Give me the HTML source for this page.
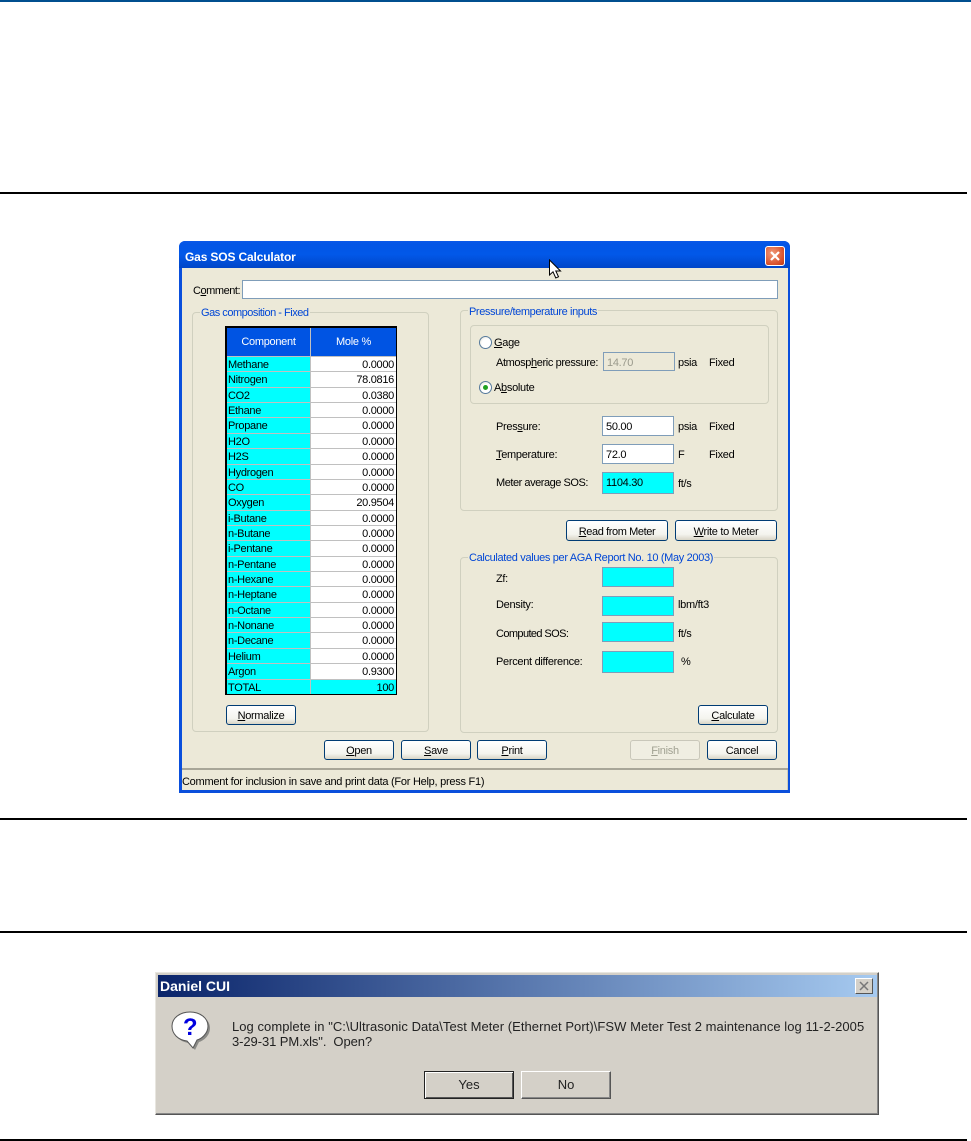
<!DOCTYPE html>
<html><head><meta charset="utf-8"><style>
html,body{margin:0;padding:0;background:#fff}
body{position:relative;width:971px;height:1141px;overflow:hidden;font-family:"Liberation Sans",sans-serif;font-size:11px;color:#000;letter-spacing:-.3px}
div{position:absolute;box-sizing:border-box}
.r{left:0;width:967px;height:2px;background:#000}
.t{white-space:nowrap;line-height:14px;height:14px;margin-top:1px}
.in{border:1px solid #7f9db9;background:#fff;padding-left:3px;line-height:21px;font-size:11px}
.g{border:1px solid #d0d0bf;border-radius:4px}
.lg{background:#ece9d8;color:#0046d5;padding:0 1px;white-space:nowrap;line-height:14px;height:14px;margin-top:1px}
.b{border:1px solid #003c74;border-radius:3px;background:linear-gradient(#fff,#f4f4ee 70%,#d9d5c6);text-align:center;line-height:21px;white-space:nowrap}
.tb{left:225px;top:326px;width:172px;height:369px;border:1px solid #000;background:#fff;border-width:2px 1px 1px 2px}
.h{left:0;top:0;height:29px;background:#0054e3;color:#fff;text-align:center;line-height:29px}
.row{position:relative;flex:1;border-top:1px solid #c0c0c0;line-height:17px;font-size:11px}
.row span{position:absolute;top:0;height:15px;box-sizing:border-box;white-space:nowrap}
.n{left:0;width:84px;background:#0ff;padding-left:1px;border-right:1px solid #c0c0c0;height:100%!important}
.v{left:84px;width:85px;text-align:right;padding-right:2px}
.rad{width:13px;height:13px;border:1px solid #567a9c;border-radius:50%;background:radial-gradient(circle at 60% 60%,#fff 50%,#dcd8c8)}
.d{font-size:13px;letter-spacing:0;color:#222;filter:blur(.3px)}
</style></head><body>
<div style="left:0;top:0;width:971px;height:2px;background:#004f8f"></div>
<div class="r" style="top:192px"></div>
<div class="r" style="top:818px"></div>
<div class="r" style="top:931px"></div>
<div class="r" style="top:1139px"></div>

<div style="left:179px;top:241px;width:611px;height:552px;background:#0a4fdc;border-radius:6px 6px 0 0"></div>
<div style="left:179px;top:241px;width:611px;height:27px;border-radius:6px 6px 0 0;background:linear-gradient(#0a58e8,#0355e6 12%,#0258e8 50%,#0046c8)"></div>
<div style="left:182px;top:268px;width:606px;height:522px;background:#ece9d8"></div>
<div class="t" style="left:185px;top:249px;color:#fff;font-weight:bold;font-size:12px;letter-spacing:-.15px">Gas SOS Calculator</div>
<div style="left:765px;top:246px;width:20px;height:20px;border:1px solid #fff;border-radius:3px;background:radial-gradient(circle at 35% 35%,#f09a7a,#d8502a 70%,#b83a1a)">
<svg width="18" height="18" style="position:absolute;left:0;top:0"><path d="M5 5L13 13M13 5L5 13" stroke="#fff" stroke-width="2.2"/></svg></div>
<svg style="position:absolute;left:548px;top:259px" width="14" height="21"><path d="M1.5 1V16L5 12.800L7.800 19L10.500 17.800L7.800 12H12.500Z" fill="#fff" stroke="#000"/></svg>

<div class="t" style="left:193px;top:283px;letter-spacing:-.45px">C<u>o</u>mment:</div>
<div class="in" style="left:242px;top:280px;width:536px;height:19px"></div>

<div class="g" style="left:192px;top:312px;width:237px;height:420px"></div>
<div class="lg" style="left:200px;top:305px;letter-spacing:-.48px">Gas composition - Fixed</div>

<div class="tb">
<div class="h" style="width:83px">Component</div><div class="h" style="left:84px;width:85px">Mole %</div>
<div style="left:83px;top:0;width:1px;height:29px;background:#c0c0c0"></div>
<div style="left:0;top:28px;width:169px;height:338px;display:flex;flex-direction:column">
<div class="row"><span class="n">Methane</span><span class="v">0.0000</span></div>
<div class="row"><span class="n">Nitrogen</span><span class="v">78.0816</span></div>
<div class="row"><span class="n">CO2</span><span class="v">0.0380</span></div>
<div class="row"><span class="n">Ethane</span><span class="v">0.0000</span></div>
<div class="row"><span class="n">Propane</span><span class="v">0.0000</span></div>
<div class="row"><span class="n">H2O</span><span class="v">0.0000</span></div>
<div class="row"><span class="n">H2S</span><span class="v">0.0000</span></div>
<div class="row"><span class="n">Hydrogen</span><span class="v">0.0000</span></div>
<div class="row"><span class="n">CO</span><span class="v">0.0000</span></div>
<div class="row"><span class="n">Oxygen</span><span class="v">20.9504</span></div>
<div class="row"><span class="n">i-Butane</span><span class="v">0.0000</span></div>
<div class="row"><span class="n">n-Butane</span><span class="v">0.0000</span></div>
<div class="row"><span class="n">i-Pentane</span><span class="v">0.0000</span></div>
<div class="row"><span class="n">n-Pentane</span><span class="v">0.0000</span></div>
<div class="row"><span class="n">n-Hexane</span><span class="v">0.0000</span></div>
<div class="row"><span class="n">n-Heptane</span><span class="v">0.0000</span></div>
<div class="row"><span class="n">n-Octane</span><span class="v">0.0000</span></div>
<div class="row"><span class="n">n-Nonane</span><span class="v">0.0000</span></div>
<div class="row"><span class="n">n-Decane</span><span class="v">0.0000</span></div>
<div class="row"><span class="n">Helium</span><span class="v">0.0000</span></div>
<div class="row"><span class="n">Argon</span><span class="v">0.9300</span></div>
<div class="row" style="background:#0ff"><span class="n">TOTAL</span><span class="v">100</span></div>
</div></div>

<div class="b" style="left:226px;top:705px;width:70px;height:20px"><u>N</u>ormalize</div>

<div class="g" style="left:460px;top:310px;width:318px;height:201px"></div>
<div class="lg" style="left:468px;top:304px;letter-spacing:-.4px">Pressure/temperature inputs</div>
<div class="g" style="left:470px;top:325px;width:299px;height:79px"></div>
<div class="rad" style="left:479px;top:336px"></div>
<div class="t" style="left:494px;top:335px"><u>G</u>age</div>
<div class="t" style="left:496px;top:355px;letter-spacing:-.38px">Atmosp<u>h</u>eric pressure:</div>
<div class="in" style="left:603px;top:352px;width:72px;height:19px;background:#ece9d8;color:#9a9a8c">14.70</div>
<div class="t" style="left:678px;top:355px">psia</div><div class="t" style="left:709px;top:355px">Fixed</div>
<div class="rad" style="left:479px;top:381px"></div>
<div style="left:483px;top:385px;width:5px;height:5px;border-radius:50%;background:#21a121"></div>
<div class="t" style="left:494px;top:380px">A<u>b</u>solute</div>

<div class="t" style="left:496px;top:419px">Pres<u>s</u>ure:</div>
<div class="in" style="left:602px;top:416px;width:72px;height:20px">50.00</div>
<div class="t" style="left:678px;top:419px">psia</div><div class="t" style="left:709px;top:419px">Fixed</div>
<div class="t" style="left:496px;top:447px"><u>T</u>emperature:</div>
<div class="in" style="left:602px;top:444px;width:72px;height:20px">72.0</div>
<div class="t" style="left:678px;top:447px">F</div><div class="t" style="left:709px;top:447px">Fixed</div>
<div class="t" style="left:496px;top:475px;letter-spacing:-.46px">Meter average SOS:</div>
<div class="in" style="left:602px;top:472px;width:72px;height:22px;background:#0ff">1104.30</div>
<div class="t" style="left:678px;top:476px">ft/s</div>

<div class="b" style="left:566px;top:520px;width:102px;height:21px;line-height:23px;letter-spacing:-.4px"><u>R</u>ead from Meter</div>
<div class="b" style="left:675px;top:520px;width:102px;height:21px;line-height:23px"><u>W</u>rite to Meter</div>

<div class="g" style="left:460px;top:557px;width:318px;height:176px"></div>
<div class="lg" style="left:468px;top:550px;letter-spacing:-.34px">Calculated values per AGA Report No. 10 (May 2003)</div>
<div class="t" style="left:496px;top:571px">Zf:</div>
<div class="in" style="left:602px;top:567px;width:72px;height:20px;background:#0ff"></div>
<div class="t" style="left:496px;top:597px">Density:</div>
<div class="in" style="left:602px;top:596px;width:72px;height:20px;background:#0ff"></div>
<div class="t" style="left:678px;top:597px">lbm/ft3</div>
<div class="t" style="left:496px;top:626px;letter-spacing:-.6px">Computed SOS:</div>
<div class="in" style="left:602px;top:622px;width:72px;height:20px;background:#0ff"></div>
<div class="t" style="left:678px;top:626px">ft/s</div>
<div class="t" style="left:496px;top:654px">Percent difference:</div>
<div class="in" style="left:602px;top:651px;width:72px;height:22px;background:#0ff"></div>
<div class="t" style="left:681px;top:654px">%</div>
<div class="b" style="left:698px;top:705px;width:70px;height:20px"><u>C</u>alculate</div>

<div class="b" style="left:324px;top:740px;width:70px;height:20px"><u>O</u>pen</div>
<div class="b" style="left:401px;top:740px;width:70px;height:20px"><u>S</u>ave</div>
<div class="b" style="left:477px;top:740px;width:70px;height:20px"><u>P</u>rint</div>
<div class="b" style="left:630px;top:740px;width:70px;height:20px;border-color:#c9c7ba;background:#f0eee2;color:#a1a192"><u>F</u>inish</div>
<div class="b" style="left:707px;top:740px;width:70px;height:20px">Cancel</div>

<div style="left:182px;top:768px;width:606px;height:2px;background:#a8a698"></div>
<div class="t" style="left:182px;top:774px;letter-spacing:-.26px">Comment for inclusion in save and print data (For Help, press F1)</div>
<div style="left:787px;top:770px;width:1px;height:20px;background:#cfccbc"></div>

<div style="left:155px;top:972px;width:724px;height:143px;background:#d4d0c8;border:1px solid;border-color:#e8e6e0 #555 #555 #e8e6e0;box-shadow:inset -1px -1px 0 #888"></div>
<div style="left:158px;top:975px;width:719px;height:22px;background:linear-gradient(90deg,#0a246a,#a6caf0)"></div>
<div class="t" style="left:160px;top:978px;color:#fff;font-weight:bold;font-size:14px;letter-spacing:0;line-height:15px;height:15px">Daniel CUI</div>
<div style="left:855px;top:978px;width:18px;height:16px;background:#d4d0c8;border:1px solid;border-color:#fff #555 #555 #fff">
<svg width="16" height="14" style="position:absolute;left:0;top:0"><path d="M4 3L12 11M12 3L4 11" stroke="#777" stroke-width="1.500"/></svg></div>
<svg style="position:absolute;left:170px;top:1010px" width="44" height="44">
<path d="M22 4C32 4 40 10 40 18C40 26 33 31 29 32L25 40L19 33C10 32 4 26 4 18C4 10 12 4 22 4Z" fill="#8a8a86"/>
<path d="M20 2C30 2 38 8 38 16C38 24 31 29 27 30L23 38L17 31C8 30 2 24 2 16C2 8 10 2 20 2Z" fill="#fff" stroke="#555"/>
<text x="20" y="25" text-anchor="middle" font-family="Liberation Sans,sans-serif" font-weight="bold" font-size="24" fill="#0000e0">?</text></svg>
<div class="t d" style="left:232px;top:1018px;height:16px;line-height:16px;letter-spacing:.05px">Log complete in "C:\Ultrasonic Data\Test Meter (Ethernet Port)\FSW Meter Test 2 maintenance log 11-2-2005</div>
<div class="t d" style="left:232px;top:1033px;height:16px;line-height:16px;letter-spacing:-.08px">3-29-31 PM.xls".&nbsp; Open?</div>
<div style="left:424px;top:1071px;width:90px;height:28px;background:#d4d0c8;border:1px solid #222;box-shadow:inset 1px 1px 0 #fff,inset -1px -1px 0 #555;text-align:center;line-height:26px;font-size:13px;letter-spacing:0;color:#222">Yes</div>
<div style="left:521px;top:1071px;width:90px;height:28px;background:#d4d0c8;border:1px solid;border-color:#fff #555 #555 #fff;box-shadow:inset -1px -1px 0 #888;text-align:center;line-height:26px;font-size:13px;letter-spacing:0;color:#222">No</div>
</body></html>
